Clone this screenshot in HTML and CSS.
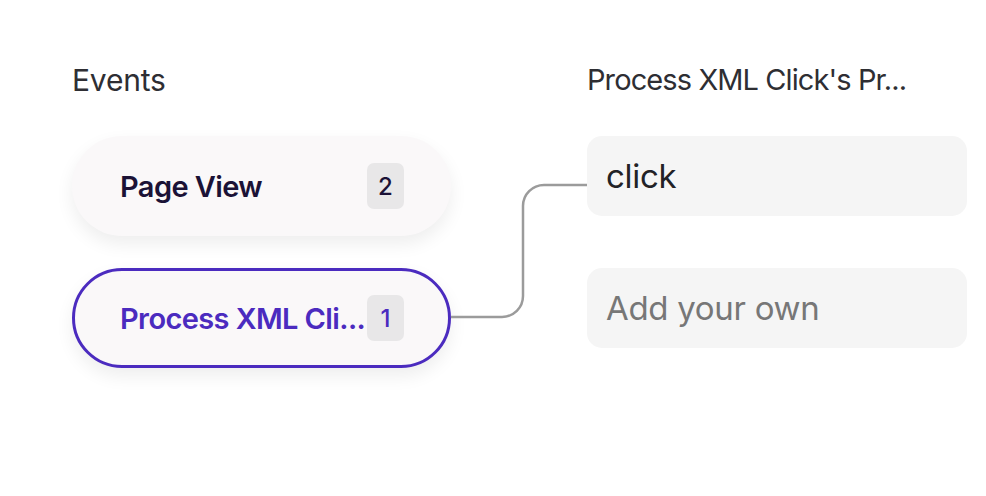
FILE: index.html
```html
<!DOCTYPE html>
<html lang="en">
<head>
<meta charset="utf-8">
<title>Events</title>
<link rel="stylesheet" href="styles.css">
</head>
<body>
<div class="board">
  <div class="col">
    <h2 class="heading">Events</h2>
    <div class="pill">
      <span class="pill-label">Page View</span>
      <span class="badge">2</span>
    </div>
    <div class="pill pill-active">
      <span class="pill-label">Process XML Cli...</span>
      <span class="badge">1</span>
    </div>
  </div>
  <div class="col">
    <h2 class="heading heading-narrow">Process XML Click's Pr...</h2>
    <div class="field">click</div>
    <div class="field field-placeholder">Add your own</div>
  </div>
  <svg class="connector" width="140" height="140" viewBox="0 0 140 140">
    <path d="M0 132 H51 A21 21 0 0 0 72 111 V21 A21 21 0 0 1 93 0 H136" transform="translate(0 1)" fill="none" stroke="#9b9b9b" stroke-width="2.5"/>
  </svg>
</div>
</body>
</html>
```
FILE: styles.css
```css
* { box-sizing: border-box; }
html, body {
  margin: 0;
  padding: 0;
  background: #ffffff;
}
body {
  font-family: "Inter", "Noto Sans", sans-serif;
  width: 986px;
  height: 496px;
  overflow: hidden;
}
.board {
  position: relative;
  display: flex;
  gap: 136px;
  padding: 64px 0 0 72px;
}
.col {
  display: flex;
  flex-direction: column;
  gap: 32px;
}
.col:first-child { width: 379px; }
.col:nth-child(2) { width: 380px; }
.heading {
  margin: 0 0 8px 0;
  font-size: 30px;
  line-height: 32px;
  font-weight: 400;
  color: #2e2e33;
  letter-spacing: -0.2px;
  white-space: nowrap;
}
.heading-narrow {
  font-size: 29px;
  letter-spacing: -0.9px;
}
.pill {
  height: 100px;
  border: 3px solid transparent;
  border-radius: 50px;
  background: #faf8f9;
  box-shadow: 0 8px 18px rgba(0, 0, 0, 0.07);
  display: flex;
  align-items: center;
  gap: 5px;
  padding: 0 44px 0 45px;
  color: #1b1236;
}
.pill-active {
  border-color: #4b2bbf;
  color: #4b2bbf;
}
.pill-label {
  flex: 1;
  min-width: 0;
  white-space: nowrap;
  font-size: 29px;
  font-weight: 600;
  letter-spacing: -0.6px;
}
.badge {
  flex: none;
  width: 37px;
  height: 46px;
  border-radius: 7px;
  background: #e8e7e8;
  display: flex;
  align-items: center;
  justify-content: center;
  font-size: 24px;
  font-weight: 500;
}
.field {
  height: 80px;
  border-radius: 15px;
  background: #f5f5f5;
  display: flex;
  align-items: center;
  padding: 0 19px;
  font-size: 33px;
  color: #222226;
  letter-spacing: -0.3px;
}
.field + .field { margin-top: 20px; }
.field-placeholder { color: #777777; }
.connector {
  position: absolute;
  left: 451px;
  top: 184px;
  overflow: visible;
}
```
